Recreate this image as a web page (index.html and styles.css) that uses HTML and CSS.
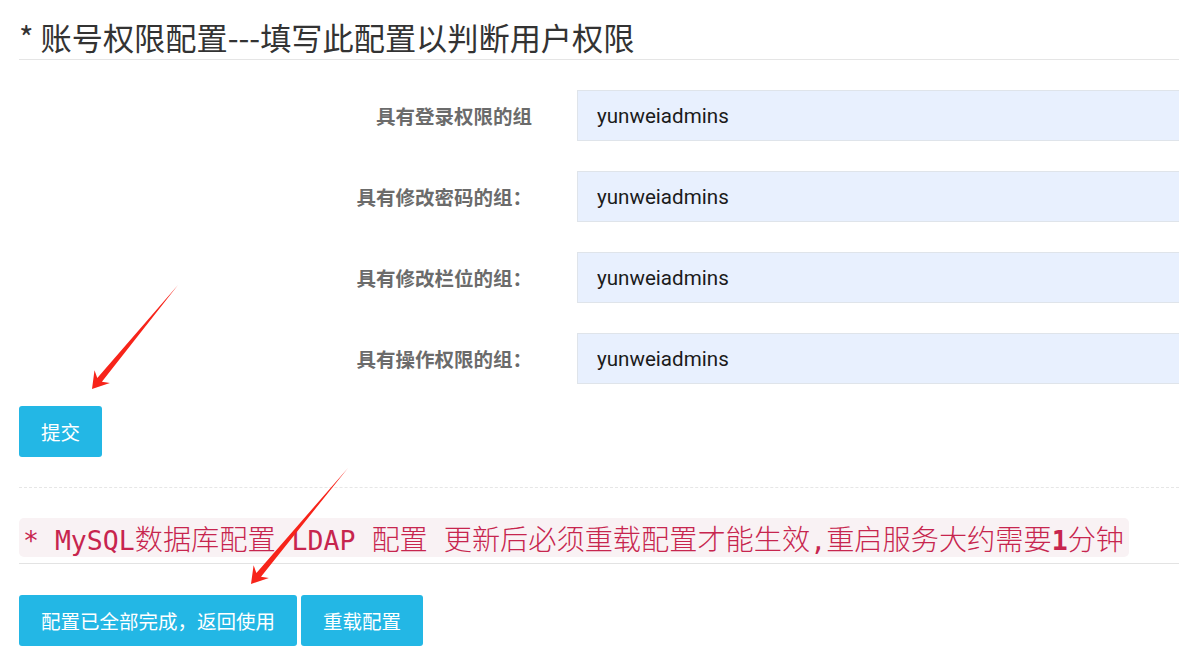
FILE: index.html
```html
<!DOCTYPE html>
<html lang="zh-CN">
<head>
<meta charset="utf-8">
<title>账号权限配置</title>
<link rel="stylesheet" href="styles.css">
</head>
<body>
<div class="page">
  <h3 class="title">* 账号权限配置---填写此配置以判断用户权限</h3>
  <form class="perm-form">
    <div class="row">
      <label class="row-label">具有登录权限的组</label>
      <input class="row-input" type="text" value="yunweiadmins">
    </div>
    <div class="row">
      <label class="row-label">具有修改密码的组：</label>
      <input class="row-input" type="text" value="yunweiadmins">
    </div>
    <div class="row">
      <label class="row-label">具有修改栏位的组：</label>
      <input class="row-input" type="text" value="yunweiadmins">
    </div>
    <div class="row">
      <label class="row-label">具有操作权限的组：</label>
      <input class="row-input" type="text" value="yunweiadmins">
    </div>
    <div class="submit-row">
      <button type="button" class="btn">提交</button>
    </div>
  </form>
  <div class="dashed"></div>
  <div class="notice-row">
    <code class="notice"><span class="lat">* MySQL</span>数据库配置<span class="lat"> LDAP </span>配置<span class="lat"> </span>更新后必须重载配置才能生效<span class="lat">,</span>重启服务大约需要<span class="lat num">1</span>分钟</code>
  </div>
  <div class="actions">
    <button type="button" class="btn">配置已全部完成，返回使用</button>
    <button type="button" class="btn">重载配置</button>
  </div>
  <svg class="arrows" width="1179" height="664" viewBox="0 0 1179 664">
    <polygon points="178,285 101.9,381.7 109.9,383.1 92,389 94.5,370.3 97.3,377.9" />
    <polygon points="348,468 261,576.7 268.9,578.1 251,584 253.6,565.3 256.4,572.9" />
  </svg>
</div>
</body>
</html>
```
FILE: styles.css
```css
html, body {
  margin: 0;
  padding: 0;
  background: #fff;
  overflow: hidden;
}
.page {
  position: relative;
  padding-left: 19px;
  width: 1160px;
  height: 664px;
  font-family: "Noto Sans CJK SC", sans-serif;
}
.title {
  margin: 0;
  padding-top: 15px;
  height: 44px;
  line-height: 44px;
  font-size: 31.2px;
  font-weight: normal;
  color: #333;
  border-bottom: 1px solid #e5e5e5;
}
.perm-form {
  margin: 0;
  padding-top: 30px;
}
.row {
  display: grid;
  grid-template-columns: 513px 1fr;
  column-gap: 45px;
  align-items: center;
  margin-bottom: 30px;
}
.row-label {
  text-align: right;
  font-size: 19.5px;
  font-weight: bold;
  color: #6b6b6b;
}
.row-input {
  box-sizing: border-box;
  width: 100%;
  height: 51px;
  margin: 0;
  padding: 0 0 0 19px;
  border: 1px solid #dfe4ea;
  border-right: none;
  background: #e8f0fe;
  font-family: Roboto, sans-serif;
  font-size: 20.6px;
  color: #1b1b1b;
  outline: none;
}
.submit-row {
  margin-top: -8px;
}
.btn {
  box-sizing: border-box;
  height: 51px;
  padding: 0 22px;
  border: none;
  border-radius: 3px;
  background: #23b7e5;
  color: #fff;
  font-family: "Noto Sans CJK SC", sans-serif;
  font-size: 19.5px;
  cursor: pointer;
}
.dashed {
  margin-top: 30px;
  border-top: 1px dashed #e6e6e6;
}
.notice-row {
  padding-top: 30px;
  padding-bottom: 6px;
  border-bottom: 1px solid #e3e3e3;
}
.notice {
  display: inline-block;
  height: 39px;
  line-height: 39px;
  padding: 0 5px 0 4px;
  border-radius: 5px;
  background: #f9f2f4;
  color: #c7254e;
  font-family: "Noto Sans CJK SC", sans-serif;
  font-weight: 300;
  font-size: 28.2px;
  white-space: pre;
  vertical-align: top;
}
.lat {
  font-family: "DejaVu Sans Mono", monospace;
  font-weight: normal;
  font-size: 26.5px;
}
.num {
  font-weight: bold;
}
.actions {
  display: flex;
  gap: 4px;
  padding-top: 31px;
}
.arrows {
  position: absolute;
  top: 0;
  left: 0;
  pointer-events: none;
}
.arrows polygon {
  fill: #f7241a;
}
```
